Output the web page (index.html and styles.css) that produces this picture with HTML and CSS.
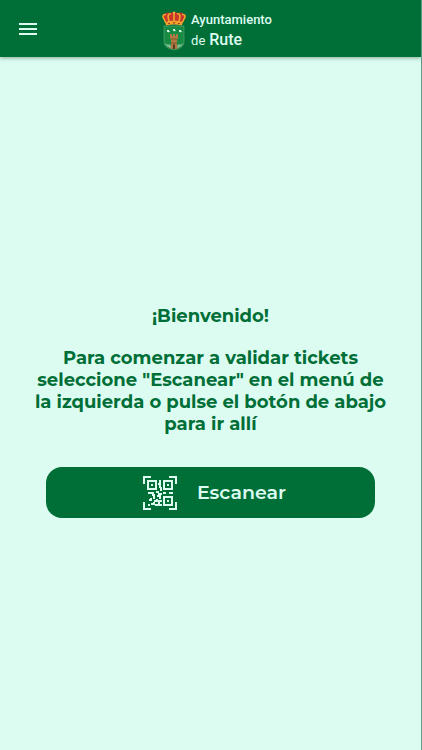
FILE: index.html
```html
<!DOCTYPE html>
<html lang="es">
<head>
<meta charset="utf-8">
<meta name="viewport" content="width=device-width, initial-scale=1">
<title>Ayuntamiento de Rute</title>
<link rel="stylesheet" href="styles.css">
</head>
<body>
<header class="topbar">
  <button class="menu" type="button" aria-label="Menú">
    <svg width="18" height="14" viewBox="0 0 18 14" aria-hidden="true"><path d="M0 2h18M0 7h18M0 12h18" stroke="currentColor" stroke-width="2"/></svg>
  </button>
  <div class="brand">
    <svg class="crest" width="26" height="40" viewBox="0 0 26 40" aria-hidden="true">
      <path d="M5 13 1.500 6Q1 3 4 2.500Q7 1 9 2Q11 1 13 1Q15 1 17 2Q20 1 22 2.500Q25 3 24.500 6L21 13Z" fill="#c8362b"/>
      <path d="M5 12 2 6Q2 3 5 3.500M8 11 7 5Q8 2 10 3M13 11V2M18 11 19 5Q18 2 16 3M21 12 24 6Q24 3 21 3.500" fill="none" stroke="#eba52d" stroke-width="1.600"/>
      <path d="M4.500 11Q13 8 21.500 11L21 14.500Q13 12.500 5 14.500Z" fill="#f0a32c"/>
      <path d="M7 12.500h2M12 11.800h2M17 12.500h2" stroke="#b73b27" stroke-width="1.200"/>
      <circle cx="13" cy="1.500" r="1" fill="#f3c75b"/>
      <path d="M3 15H23V31Q23 37 13 39Q3 37 3 31Z" fill="#178a43" stroke="#60a77a" stroke-width=".6"/>
      <path d="M6 20q1-2 2 0t-2 0M12 19q1-2 2 0t-2 0M18 20q1-2 2 0t-2 0" fill="#e3fff3" stroke="#e3fff3"/>
      <path d="M9 23h2v2h1v-2h2v2h1v-2h2v5h-1v6l2 3Q16 38 13 38Q10 38 8 37l2-3v-6H9Z" fill="#b07a42"/>
      <path d="M10 28h6M10 32h6" stroke="#745027" stroke-width=".8"/>
      <path d="M12 38v-4q1-2 2 0v4" fill="#553e20"/>
      <path d="M4 32q3 3 5 1l1 4q-5-1-6-5M22 32q-3 3-5 1l-1 4q5-1 6-5" fill="#7fc095"/>
    </svg>
    <div class="name"><span>Ayuntamiento</span><span class="town"><small>de</small> Rute</span></div>
  </div>
</header>
<main class="welcome">
  <h1>¡Bienvenido!</h1>
  <p>Para comenzar a validar tickets<br>seleccione "Escanear" en el menú de<br>la izquierda o pulse el botón de abajo<br>para ir allí</p>
  <button class="scan" type="button">
    <svg width="34" height="34" viewBox="0 0 34 34" fill="none" stroke="currentColor" stroke-width="2" aria-hidden="true">
      <path d="M1 8V1H8M26 1h7v7M33 26v7h-7M8 33H1v-7"/>
      <path d="M5 5h8v8H5ZM21 5h8v8h-8ZM21 21h8v8h-8Z"/>
      <path d="M8 9h2M24 9h2M24 25h2M17 4v3M15 8h2v4M18 11v4M5 17h6M13 16h3M20 17h3M26 17h4M9 19h3M15 18h4M11 19v4M14 20h4M17 20v3M6 24h2v-2M11 25h3v-2M15 25h4M5 29h2M8 28h3v-2M12 29h7M16 26v3"/>
    </svg>
    <span>Escanear</span>
  </button>
</main>
</body>
</html>
```
FILE: styles.css
```css
* {
  box-sizing: border-box;
}

body {
  margin: 0;
  min-height: 100vh;
  display: flex;
  flex-direction: column;
  background: #dcfcf1;
  color: #006e37;
  border-right: 1px solid #5a9e88;
  font-family: Montserrat, Inter, sans-serif;
}

button {
  border: 0;
  font: inherit;
  color: #dcfcf1;
  cursor: pointer;
}

.topbar {
  display: grid;
  grid-template-columns: 56px 1fr 56px;
  align-items: center;
  height: 57px;
  background: #006e37;
  box-shadow: 0 1px 4px rgba(0, 50, 25, 0.4);
}

.menu {
  display: grid;
  place-items: center;
  height: 56px;
  padding: 0;
  background: none;
}

.brand {
  display: flex;
  justify-content: center;
  align-items: center;
  gap: 4px;
  padding: 4px 0 0 12px;
  color: #dcfcf1;
}

.name {
  display: flex;
  flex-direction: column;
  font-family: Roboto, sans-serif;
  font-size: 13px;
  font-weight: 500;
  line-height: 20px;
}

.town {
  font-size: 16px;
}

.town small {
  font-size: 13px;
  font-weight: 400;
}

.welcome {
  flex: 1;
  display: flex;
  flex-direction: column;
  align-items: center;
  justify-content: center;
  padding: 16px 16px 0;
  text-align: center;
  font-size: 18px;
  font-weight: 700;
  line-height: 22px;
}

.welcome h1 {
  margin: 0 0 20px;
  font-size: inherit;
}

.welcome p {
  margin: 0 0 32px;
}

.scan {
  display: flex;
  justify-content: center;
  align-items: center;
  gap: 20px;
  width: calc(100% - 60px);
  height: 51px;
  padding: 0 0 0 8px;
  border-radius: 16px;
  background: #006e37;
  font-size: 19px;
  font-weight: 600;
}
```
